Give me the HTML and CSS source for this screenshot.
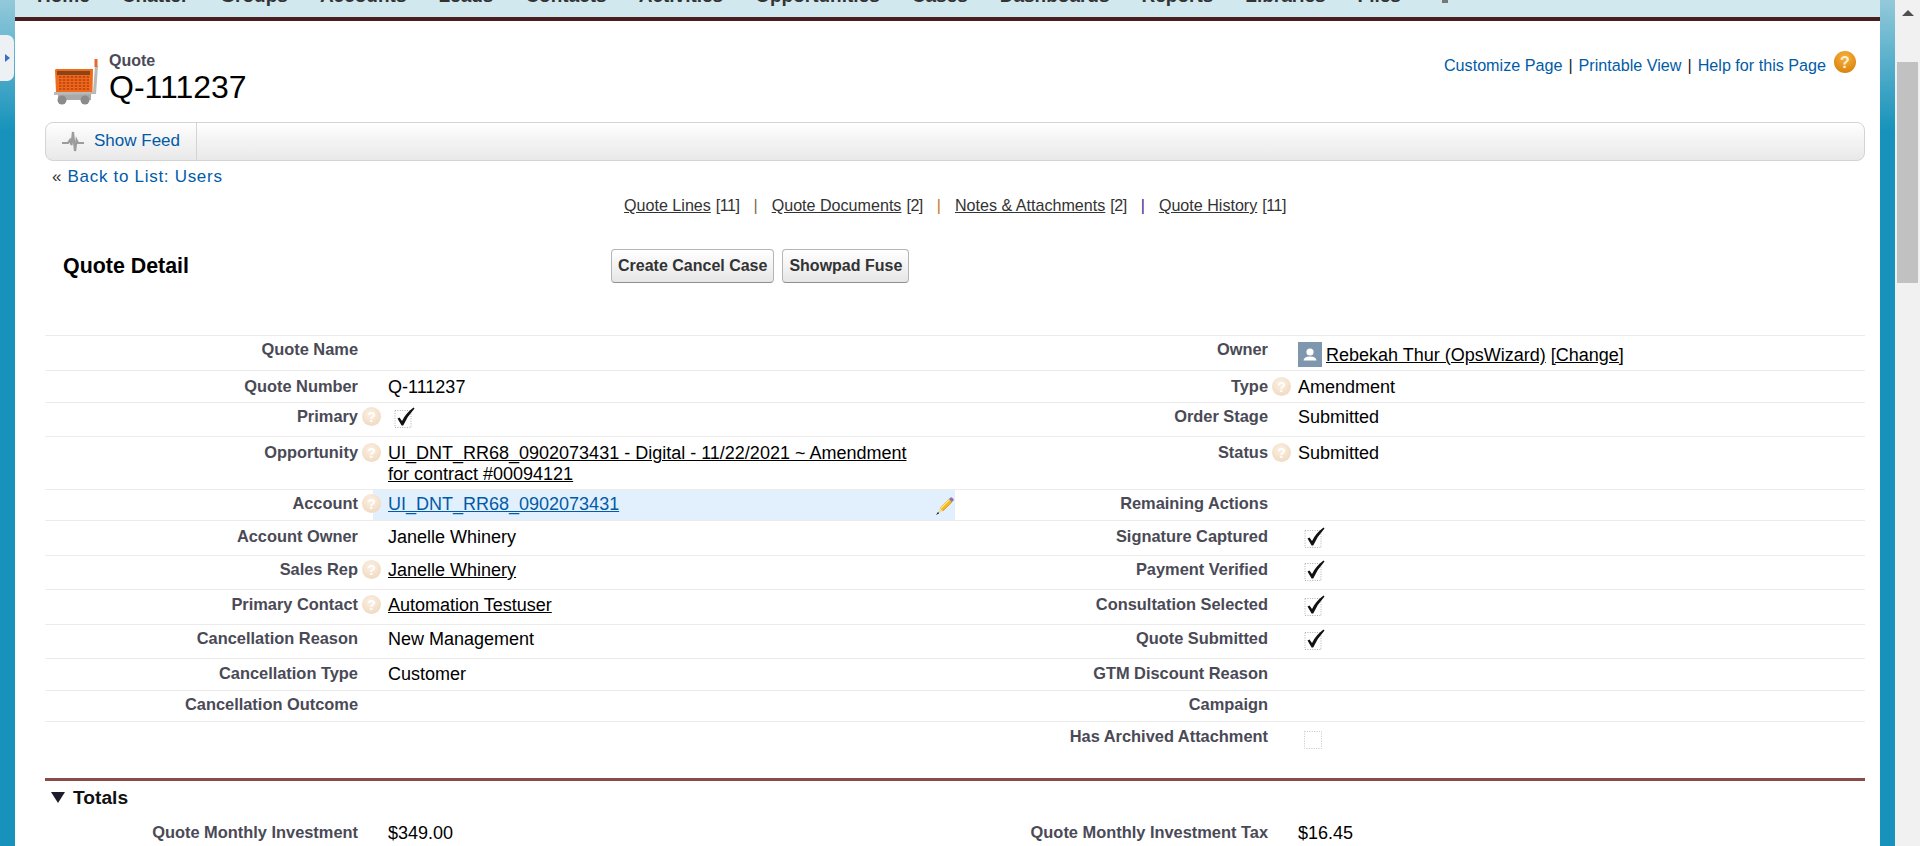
FILE: index.html
```html
<!DOCTYPE html>
<html lang="en">
<head>
  <meta charset="UTF-8" />
  <title>Quote: Q-111237</title>
  <link rel="stylesheet" href="styles.css">
</head>
<body>

<svg class="defs" width="0" height="0">
  <defs>
    <radialGradient id="pale" cx="45%" cy="35%" r="70%">
      <stop offset="0" stop-color="#fbf1e4" />
      <stop offset="1" stop-color="#f0d8bf" />
    </radialGradient>
    <radialGradient id="amber" cx="50%" cy="30%" r="75%">
      <stop offset="0" stop-color="#f7b23c" />
      <stop offset="1" stop-color="#d97f0c" />
    </radialGradient>
    <symbol id="help" viewBox="0 0 19 19">
      <circle cx="9.5" cy="9.5" r="9.5" fill="url(#pale)" />
      <text x="9.5" y="14.5" text-anchor="middle" class="help-mark">?</text>
    </symbol>
    <symbol id="checked" viewBox="0 0 22 22">
      <rect x="1" y="3.5" width="16" height="17" fill="none" stroke="#b0b0b0" stroke-dasharray="1 1.4" />
      <path d="M3.5 11.5 L5.5 10.5 L8 14 Q11.5 6.5 19.5 0.5 L20.5 1.5 Q13.5 9 9.2 18.5 L7.6 18.5 Z" fill="#111" />
    </symbol>
  </defs>
</svg>

<div class="side side-left">
  <div class="side-handle"><span class="handle-arrow"></span></div>
</div>

<div class="main">
  <div class="tabbar">
    <span>Home</span>
    <span>Chatter</span>
    <span>Groups</span>
    <span>Accounts</span>
    <span>Leads</span>
    <span>Contacts</span>
    <span>Activities</span>
    <span>Opportunities</span>
    <span>Cases</span>
    <span>Dashboards</span>
    <span>Reports</span>
    <span>Libraries</span>
    <span>Files</span>
    <i class="tab-plus"></i>
  </div>

  <div class="content">
    <div class="page-head">
      <svg class="cart" width="44" height="46" viewBox="0 0 44 46">
        <rect x="4" y="35" width="33" height="6" fill="#a9a9a9" />
        <circle cx="8" cy="41" r="4.5" fill="#8b8b8b" />
        <circle cx="31" cy="41" r="4.5" fill="#8b8b8b" />
        <path d="M41 7 L44 7 L42 35 L0 36 L0 33 L39 33 Z" fill="#b9b9b9" />
        <rect x="40.5" y="0" width="3" height="8" fill="#e8692a" />
        <path d="M1 11 Q1 10 3 10 L39 10 L38.5 33 L2 33 Z" fill="#ef6a1c" />
        <rect x="3" y="12" width="33" height="4" fill="#8a4418" />
        <path d="M5 18h30M5 21h30M5 24h30M5 27h30M5 30h30" stroke="#b8400e" stroke-width="1.4" />
        <path d="M8 17v14M12 17v14M16 17v14M20 17v14M24 17v14M28 17v14M32 17v14" stroke="#ef6a1c" stroke-width="1.4" />
      </svg>
      <div class="title-block">
        <div class="title-type">Quote</div>
        <h1 class="title-name">Q-111237</h1>
      </div>
      <div class="page-links">
        <a href="#">Customize Page</a><span class="pipe">|</span><a href="#">Printable View</a><span class="pipe">|</span><a href="#">Help for this Page</a>
        <svg class="help-big" width="22" height="22" viewBox="0 0 22 22">
          <circle cx="11" cy="11" r="11" fill="url(#amber)" />
          <text x="11" y="17" text-anchor="middle" class="help-big-mark">?</text>
        </svg>
      </div>
    </div>

    <div class="feed-bar">
      <div class="feed-toggle">
        <svg width="22" height="21" viewBox="0 0 22 21">
          <path d="M0 12 H6 L8 9 L9.5 14 L11 1 L13 20 L14.5 9 L16 12 H22" fill="none" stroke="#9c9c9c" stroke-width="2.2" />
        </svg>
        <a href="#">Show Feed</a>
      </div>
    </div>

    <div class="back-link">&laquo; <a href="#">Back to List: Users</a></div>

    <div class="related-links">
      <a href="#">Quote Lines</a> <span class="count">[11]</span>
      <span class="sep">|</span>
      <a href="#">Quote Documents</a> <span class="count">[2]</span>
      <span class="sep sep-orange">|</span>
      <a href="#">Notes &amp; Attachments</a> <span class="count">[2]</span>
      <span class="sep sep-purple">|</span>
      <a href="#">Quote History</a> <span class="count">[11]</span>
    </div>

    <div class="detail-head">
      <h2>Quote Detail</h2>
      <button class="btn">Create Cancel Case</button>
      <button class="btn">Showpad Fuse</button>
    </div>

    <table class="detail">
      <colgroup><col class="c1"><col class="c2"><col class="c3"><col class="c4"></colgroup>
      <tr class="r35 t4">
        <td class="lbl">Quote Name</td>
        <td class="val"></td>
        <td class="lbl">Owner</td>
        <td class="val owner">
          <svg class="avatar" width="24" height="25" viewBox="0 0 24 25">
            <rect width="24" height="25" fill="#7f97ae" />
            <circle cx="12" cy="10" r="3.6" fill="#fff" />
            <path d="M5.5 18.5 Q6 14.5 12 14.5 Q18 14.5 18.5 18.5 Z" fill="#fff" />
          </svg>
          <a href="#">Rebekah Thur (OpsWizard)</a> <a href="#">[Change]</a>
        </td>
      </tr>
      <tr class="r32 t6">
        <td class="lbl">Quote Number</td>
        <td class="val">Q-111237</td>
        <td class="lbl">Type<svg class="help"><use href="#help" /></svg></td>
        <td class="val">Amendment</td>
      </tr>
      <tr class="r34 t4">
        <td class="lbl">Primary<svg class="help"><use href="#help" /></svg></td>
        <td class="val"><svg class="check"><use href="#checked" /></svg></td>
        <td class="lbl">Order Stage</td>
        <td class="val">Submitted</td>
      </tr>
      <tr class="r53 t6">
        <td class="lbl">Opportunity<svg class="help"><use href="#help" /></svg></td>
        <td class="val val-wrap"><a href="#">UI_DNT_RR68_0902073431 - Digital - 11/22/2021 ~ Amendment for contract #00094121</a></td>
        <td class="lbl">Status<svg class="help"><use href="#help" /></svg></td>
        <td class="val">Submitted</td>
      </tr>
      <tr class="r31 t4">
        <td class="lbl">Account<svg class="help"><use href="#help" /></svg></td>
        <td class="val val-edit">
          <svg class="pencil" width="18" height="18" viewBox="0 0 18 18">
            <path d="M4 11 L13 2 L16 5 L7 14 Z" fill="#f5b818" stroke="#c9820e" stroke-width="0.6" />
            <path d="M4 11 L13 2 L14 3 L5 12 Z" fill="#fde68a" />
            <path d="M13 2 L14.5 0.5 Q15.5 0 16.5 1 L17.5 2 Q18 3 17.5 3.5 L16 5 Z" fill="#8d72ad" />
            <path d="M4 11 L7 14 L1 17 Z" fill="#f1d9a8" />
            <path d="M2 15 L3.2 16.2 L0 18 Z" fill="#111" />
          </svg>
          <a href="#" class="blue">UI_DNT_RR68_0902073431</a>
        </td>
        <td class="lbl">Remaining Actions</td>
        <td class="val"></td>
      </tr>
      <tr class="r35 t6">
        <td class="lbl">Account Owner</td>
        <td class="val">Janelle Whinery</td>
        <td class="lbl">Signature Captured</td>
        <td class="val"><svg class="check"><use href="#checked" /></svg></td>
      </tr>
      <tr class="r34 t4">
        <td class="lbl">Sales Rep<svg class="help"><use href="#help" /></svg></td>
        <td class="val"><a href="#">Janelle Whinery</a></td>
        <td class="lbl">Payment Verified</td>
        <td class="val"><svg class="check"><use href="#checked" /></svg></td>
      </tr>
      <tr class="r35 t5">
        <td class="lbl">Primary Contact<svg class="help"><use href="#help" /></svg></td>
        <td class="val"><a href="#">Automation Testuser</a></td>
        <td class="lbl">Consultation Selected</td>
        <td class="val"><svg class="check"><use href="#checked" /></svg></td>
      </tr>
      <tr class="r34 t4">
        <td class="lbl">Cancellation Reason</td>
        <td class="val">New Management</td>
        <td class="lbl">Quote Submitted</td>
        <td class="val"><svg class="check"><use href="#checked" /></svg></td>
      </tr>
      <tr class="r32 t5">
        <td class="lbl">Cancellation Type</td>
        <td class="val">Customer</td>
        <td class="lbl">GTM Discount Reason</td>
        <td class="val"></td>
      </tr>
      <tr class="r31 t4">
        <td class="lbl">Cancellation Outcome</td>
        <td class="val"></td>
        <td class="lbl">Campaign</td>
        <td class="val"></td>
      </tr>
      <tr class="r57 t5">
        <td class="lbl"></td>
        <td class="val"></td>
        <td class="lbl">Has Archived Attachment</td>
        <td class="val"><svg class="empty" width="18" height="18" viewBox="0 0 18 18"><rect x="0.5" y="0.5" width="17" height="17" fill="none" stroke="#c4c4c4" stroke-dasharray="1 1.4" /></svg></td>
      </tr>
    </table>

    <div class="section-head">
      <span class="twist"></span>
      <h3>Totals</h3>
    </div>

    <table class="detail totals">
      <colgroup><col class="c1"><col class="c2"><col class="c3"><col class="c4"></colgroup>
      <tr class="r35">
        <td class="lbl">Quote Monthly Investment</td>
        <td class="val">$349.00</td>
        <td class="lbl">Quote Monthly Investment Tax</td>
        <td class="val">$16.45</td>
      </tr>
    </table>
  </div>
</div>

<div class="side side-right"></div>

<div class="scrollbar">
  <span class="scroll-up"></span>
  <div class="scroll-thumb"></div>
</div>

</body>
</html>
```

FILE: styles.css
```css
* { box-sizing: border-box; }
html, body { height: 100%; }
body {
  margin: 0;
  height: 846px;
  overflow: hidden;
  display: flex;
  font-family: "Liberation Sans", Arial, sans-serif;
  font-size: 16px;
  color: #000;
  background: #fff;
}
a { color: inherit; }
.defs { display: block; flex: none; }

/* blue page edges */
.side {
  flex: none;
  width: 15px;
  background: linear-gradient(180deg, #93c9da 0, #1793bb 130px);
}
.side-handle {
  width: 14px; height: 46px; margin-top: 35px;
  background: #eef1f3; border-radius: 0 7px 7px 0;
  display: flex; align-items: center; justify-content: center;
}
.handle-arrow {
  border-left: 5px solid #3a6fc0;
  border-top: 4px solid transparent;
  border-bottom: 4px solid transparent;
}

.main { flex: 1; min-width: 0; background: #fff; }

.tabbar {
  height: 21px; overflow: hidden;
  display: flex; gap: 32px; padding-left: 22px;
  background: #d2e8ef;
  border-bottom: 4px solid #4a1d1f;
  font-size: 19px; font-weight: bold; color: #333;
  line-height: 22px;
}
.tabbar span { margin-top: -15px; height: 22px; flex: none; }
.tab-plus { flex: none; width: 6px; height: 3px; margin-left: 9px; background: #777; }

.content { padding: 0 15px 0 30px; }

.page-head { height: 101px; padding-top: 30px; display: flex; align-items: flex-start; }
.cart { margin: 8px 0 0 9px; flex: none; }
.title-block { margin: 1px 0 0 11px; }
.title-type { font-size: 16px; line-height: 18px; font-weight: bold; color: #4a4a56; }
.title-name { margin: 0; font-size: 32px; line-height: 34px; font-weight: normal; }
.page-links {
  margin-left: auto; padding-right: 9px;
  display: flex; align-items: flex-start;
  color: #015ba7; font-size: 16.15px; line-height: 18px;
}
.page-links a { margin-top: 5px; text-decoration: none; }
.pipe { margin: 5px 6px 0; color: #222; }
.help-big { margin-left: 8px; }
.help-big-mark { font: bold 16px "Liberation Sans", sans-serif; fill: #fdf0d5; }
.help-mark { font: bold 14px "Liberation Sans", sans-serif; fill: #fff; }

.feed-bar {
  height: 39px;
  border: 1px solid #d4d4d4; border-radius: 8px;
  background: linear-gradient(180deg, #fff 0, #f4f4f4 45%, #e9e9e9 100%);
  display: flex;
}
.feed-toggle {
  width: 151px; padding-left: 16px;
  display: flex; align-items: center; gap: 11px;
  border-right: 1px solid #d4d4d4;
}
.feed-toggle a { color: #015ba7; font-size: 17px; margin: -2px 0 0 -1px; text-decoration: none; }

.back-link {
  margin: 6px 0 0 7px; line-height: 20px;
  font-size: 17px; letter-spacing: 0.7px; color: #333;
}
.back-link a { color: #015ba7; text-decoration: none; }

.related-links {
  margin-top: 8px; line-height: 20px;
  display: flex; justify-content: center; gap: 5px;
  color: #333; font-size: 16.1px;
}
.count { letter-spacing: -0.5px; }
.sep { margin: 0 9px; color: #7a6a50; }
.sep-orange { color: #c27a18; }
.sep-purple { color: #4b1a8a; }

.detail-head {
  margin-top: 34px; padding-left: 18px;
  display: flex; align-items: center; gap: 8px;
}
.detail-head h2 { margin: 0 -8px 0 0; width: 548px; font-size: 21.4px; line-height: 24px; }
.btn {
  height: 34px; padding: 0 6px;
  border: 1px solid #b5b5b5; border-bottom-color: #8f8f8f; border-radius: 4px;
  background: linear-gradient(180deg, #fff 0, #f3f3f3 50%, #e6e6e6 100%);
  font: bold 16px "Liberation Sans", sans-serif; color: #333;
}

.detail {
  width: 1820px; margin-top: 52px;
  table-layout: fixed; border-collapse: collapse;
}
.c1 { width: 328px; }
.c2 { width: 582px; }
.c3 { width: 328px; }
.c4 { width: 582px; }

.detail tr { border-top: 1px solid #ececec; }
.detail td { padding: 0; vertical-align: top; line-height: 18px; }
.r31 { height: 31px; }
.r32 { height: 32px; }
.r34 { height: 34px; }
.r35 { height: 35px; }
.r53 { height: 53px; }
.r57 { height: 56px; }
.t4 td { padding-top: 4px; }
.t5 td { padding-top: 5px; }
.t6 td { padding-top: 6px; }

.detail td.lbl {
  padding-right: 15px;
  text-align: right;
  font-size: 16.4px; font-weight: bold; color: #4a4a56;
}
.detail td.val { padding-left: 15px; font-size: 18px; line-height: 20px; }
.val a { color: #000; }
.detail td.val-wrap { line-height: 21px; padding-right: 35px; }
.detail td.val-edit { background: #e1f0fc; padding-right: 1px; }
.val-edit a.blue { color: #015ba7; }
.pencil { float: right; margin-top: 3px; }

.help {
  width: 19px; height: 19px;
  margin: 0 -23px 0 4px;
  vertical-align: -4px;
}
.check { width: 22px; height: 22px; margin-left: 6px; display: block; }
.empty { display: block; margin: 4px 0 0 6px; }
.t4 td.owner { padding-top: 6px; white-space: nowrap; }
.avatar { vertical-align: -6px; margin-right: -1px; }

.section-head {
  height: 35px; padding: 2px 0 0 6px;
  border-top: 3px solid #8a4a48;
  display: flex; align-items: center; gap: 8px;
}
.twist {
  border-top: 11px solid #1c1c2c;
  border-left: 7px solid transparent;
  border-right: 7px solid transparent;
}
.section-head h3 { margin: 0; font-size: 19.2px; line-height: 24px; color: #111; }
.detail.totals { margin-top: 10px; }
.totals tr { border-top: 0; }

.scrollbar {
  flex: none; width: 25px; height: 846px;
  background: #f1f1f1;
  display: flex; flex-direction: column; align-items: center;
}
.scroll-up {
  margin-top: 10px;
  border-bottom: 6px solid #505050;
  border-left: 6px solid transparent;
  border-right: 6px solid transparent;
}
.scroll-thumb { width: 21px; height: 221px; margin-top: 46px; background: #c1c1c1; }
```
